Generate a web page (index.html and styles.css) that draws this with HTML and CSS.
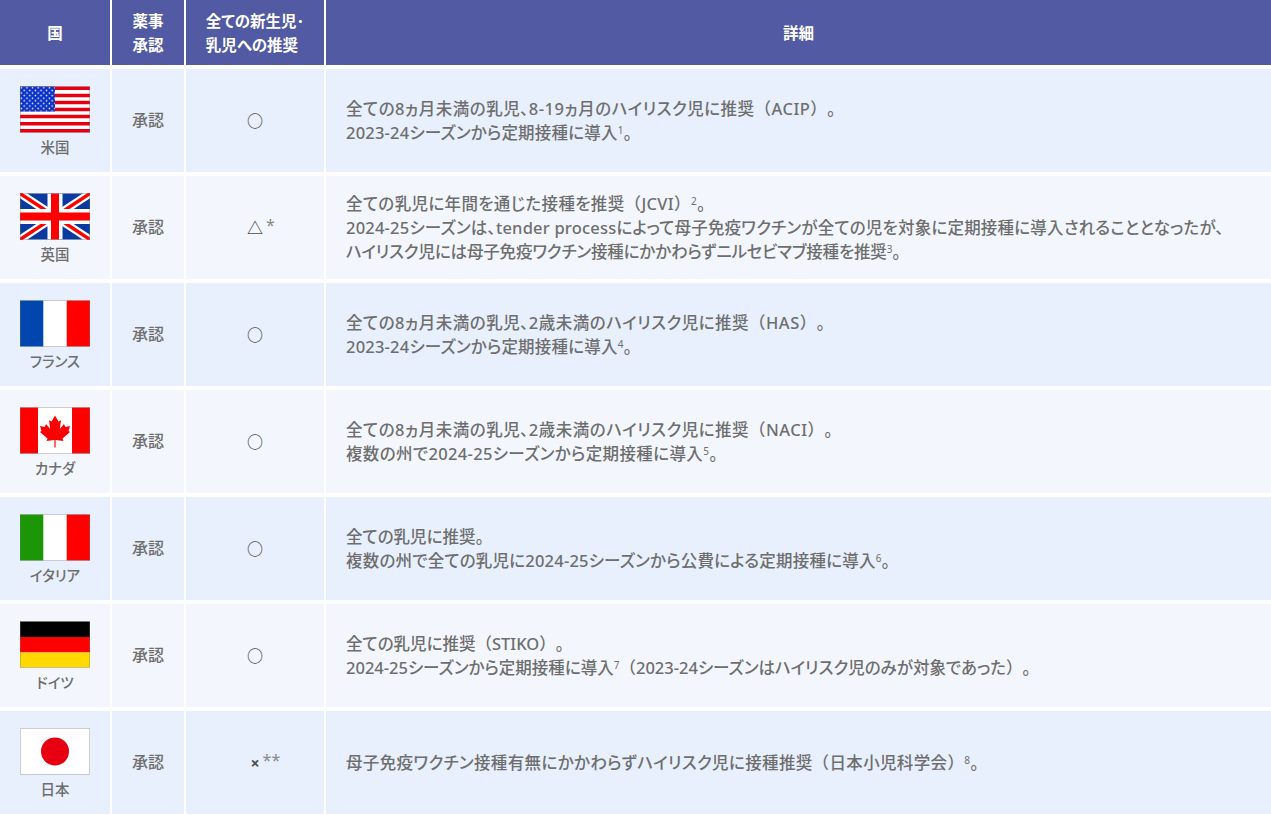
FILE: index.html
```html
<!DOCTYPE html>
<html lang="ja">
<head>
<meta charset="utf-8">
<title>各国の推奨状況</title>
<link rel="stylesheet" href="styles.css">
</head>
<body>
<svg class="defs" width="0" height="0" aria-hidden="true">
  <defs>
    <pattern id="stars" width="5.6" height="5.2" patternUnits="userSpaceOnUse">
      <circle cx="1.4" cy="1.3" r=".8" fill="#fff"/>
      <circle cx="4.2" cy="3.9" r=".8" fill="#fff"/>
    </pattern>
  </defs>
</svg>
<div class="table">
  <div class="th">国</div>
  <div class="th">薬事<br>承認</div>
  <div class="th left">全ての新生児･<br>乳児への推奨</div>
  <div class="th">詳細</div>

  <div class="row odd">
    <div class="td country">
      <svg class="flag" viewBox="0 0 70 46"><rect width="70" height="46" fill="#fff"/><path d="M0 1.8h70M0 8.9h70M0 16h70M0 23h70M0 30.100h70M0 37.200h70M0 44.300h70" stroke="#e60012" stroke-width="3.500"/><rect width="35" height="25" fill="#0a32c8"/><rect width="35" height="25" fill="url(#stars)"/></svg>
      <span>米国</span>
    </div>
    <div class="td approval">承認</div>
    <div class="td mark"><span class="sym">○</span></div>
    <div class="td detail"><p><span class="s3">全ての8ヵ月未満の乳児、8-19ヵ月のハイリスク児に推奨<span class="fw">（</span>ACIP<span class="fw">）。</span></span><br><span class="s1">2023-24シーズンから定期接種に導入<sup>1</sup>。</span></p></div>
  </div>

  <div class="row even">
    <div class="td country">
      <svg class="flag" viewBox="0 0 70 46"><rect width="70" height="46" fill="#0a3aa0"/><path d="M0 0L70 46M70 0L0 46" stroke="#fff" stroke-width="8"/><path d="M0 0L70 46M70 0L0 46" stroke="#f00" stroke-width="3.500"/><path d="M35 0V46M0 23H70" stroke="#fff" stroke-width="15"/><path d="M35 0V46M0 23H70" stroke="#f00" stroke-width="8"/></svg>
      <span>英国</span>
    </div>
    <div class="td approval">承認</div>
    <div class="td mark"><span class="sym">△<sup class="ast">*</sup></span></div>
    <div class="td detail"><p><span class="s2">全ての乳児に年間を通じた接種を推奨<span class="fw">（</span>JCVI<span class="fw">）</span><sup>2</sup>。</span><br><span class="s1">2024-25シーズンは、tender processによって母子免疫ワクチンが全ての児を対象に定期接種に導入されることとなったが、</span><br><span class="n1">ハイリスク児には母子免疫ワクチン接種にかかわらずニルセビマブ接種を推奨<sup>3</sup>。</span></p></div>
  </div>

  <div class="row odd">
    <div class="td country">
      <svg class="flag" viewBox="0 0 70 46"><rect width="70" height="46" fill="#fff"/><rect width="23.300" height="46" fill="#0046ae"/><rect x="46.700" width="23.300" height="46" fill="#f00"/></svg>
      <span>フランス</span>
    </div>
    <div class="td approval">承認</div>
    <div class="td mark"><span class="sym">○</span></div>
    <div class="td detail"><p><span class="s3">全ての8ヵ月未満の乳児、2歳未満のハイリスク児に推奨<span class="fw">（</span>HAS<span class="fw">）。</span></span><br><span class="s1">2023-24シーズンから定期接種に導入<sup>4</sup>。</span></p></div>
  </div>

  <div class="row even">
    <div class="td country">
      <svg class="flag" viewBox="0 0 70 46"><rect width="70" height="46" fill="#fff"/><rect width="18" height="46" fill="#f00"/><rect x="52" width="18" height="46" fill="#f00"/><path d="M35 8L38.500 14L41 12.800L39.800 21.500L44 16.500L45.300 19.500L50 18.500L48.500 23.500L50 24.500L42.500 31L43.500 33.500L35.600 32.500V40H34.400V32.500L26.500 33.500L27.500 31L20 24.500L21.500 23.500L20 18.500L24.700 19.500L26 16.500L30.200 21.500L29 12.800L31.500 14Z" fill="#f00"/></svg>
      <span>カナダ</span>
    </div>
    <div class="td approval">承認</div>
    <div class="td mark"><span class="sym">○</span></div>
    <div class="td detail"><p><span class="s3">全ての8ヵ月未満の乳児、2歳未満のハイリスク児に推奨<span class="fw">（</span>NACI<span class="fw">）。</span></span><br><span class="s2">複数の州で2024-25シーズンから定期接種に導入<sup>5</sup>。</span></p></div>
  </div>

  <div class="row odd">
    <div class="td country">
      <svg class="flag" viewBox="0 0 70 46"><rect width="70" height="46" fill="#fff"/><rect width="23.300" height="46" fill="#1a9606"/><rect x="46.700" width="23.300" height="46" fill="#f00"/></svg>
      <span>イタリア</span>
    </div>
    <div class="td approval">承認</div>
    <div class="td mark"><span class="sym">○</span></div>
    <div class="td detail"><p>全ての乳児に推奨。<br><span class="s1">複数の州で全ての乳児に2024-25シーズンから公費による定期接種に導入<sup>6</sup>。</span></p></div>
  </div>

  <div class="row even">
    <div class="td country">
      <svg class="flag" viewBox="0 0 70 46"><rect width="70" height="15.500" fill="#000"/><rect y="15.500" width="70" height="15.500" fill="#f00"/><rect y="31" width="70" height="15" fill="#ffd900"/></svg>
      <span>ドイツ</span>
    </div>
    <div class="td approval">承認</div>
    <div class="td mark"><span class="sym">○</span></div>
    <div class="td detail"><p>全ての乳児に推奨<span class="fw">（</span>STIKO<span class="fw">）。</span><br>2024-25シーズンから定期接種に導入<sup>7</sup><span class="fw">（</span>2023-24シーズンはハイリスク児のみが対象であった<span class="fw">）。</span></p></div>
  </div>

  <div class="row odd">
    <div class="td country">
      <svg class="flag" viewBox="0 0 70 46"><rect width="70" height="46" fill="#fff"/><circle cx="35" cy="23" r="14" fill="#e60012"/></svg>
      <span>日本</span>
    </div>
    <div class="td approval">承認</div>
    <div class="td mark"><span class="sym">×<sup class="ast">**</sup></span></div>
    <div class="td detail"><p class="s2">母子免疫ワクチン接種有無にかかわらずハイリスク児に接種推奨<span class="fw">（</span>日本小児科学会<span class="fw">）</span><sup>8</sup>。</p></div>
  </div>
</div>
</body>
</html>
```
FILE: styles.css
```css
* { box-sizing: border-box; }
html, body { margin: 0; padding: 0; background: #fff; }
.defs { position: absolute; }
.table {
  display: grid;
  grid-template-columns: 110px 72px 138px 1fr;
  grid-template-rows: 65px repeat(7, 103px);
  column-gap: 2px;
  row-gap: 4px;
  width: 1271px;
  font-family: "Noto Sans", "Noto Sans CJK JP", sans-serif;
  font-feature-settings: "palt";
  font-size: 16.5px;
  line-height: 24px;
  color: #6e6e6e;
  text-spacing-trim: space-all;
}
.th {
  display: flex;
  align-items: center;
  justify-content: center;
  text-align: center;
  background: #515aa2;
  color: #fff;
  font-size: 15.5px;
  font-weight: 700;
  line-height: 24px;
}
.th.left { text-align: left; }
.row { display: contents; }
.td {
  display: flex;
  flex-direction: column;
  align-items: center;
  justify-content: center;
  text-align: center;
  font-weight: 500;
}
.odd .td { background: #e8f0fd; }
.even .td { background: #f3f7fd; }
.country { gap: 2px; font-size: 14.5px; padding-top: 3px; }
.approval { font-size: 16px; padding-bottom: 2px; }
.flag {
  display: block;
  width: 70px;
  height: 47px;
  outline: 1px solid rgba(120, 120, 120, .35);
  outline-offset: -1px;
}
.mark { font-size: 16px; color: #4f4f4f; }
.sym { position: relative; font-feature-settings: normal; font-weight: 700; }
.ast {
  position: absolute;
  left: 100%;
  top: 1px;
  margin-left: 3px;
  font-size: 16px;
  line-height: 1;
  vertical-align: baseline;
  color: #888;
}
.detail { align-items: flex-start; text-align: left; padding: 0 20px; }
.detail p { margin: 0; }
.fw { font-feature-settings: normal; }
.s1 { letter-spacing: .2px; }
.s2 { letter-spacing: .35px; }
.s3 { letter-spacing: .48px; }
.n1 { letter-spacing: -.15px; }
sup { font-size: 10px; line-height: 0; vertical-align: 5px; font-weight: 400; }
```
